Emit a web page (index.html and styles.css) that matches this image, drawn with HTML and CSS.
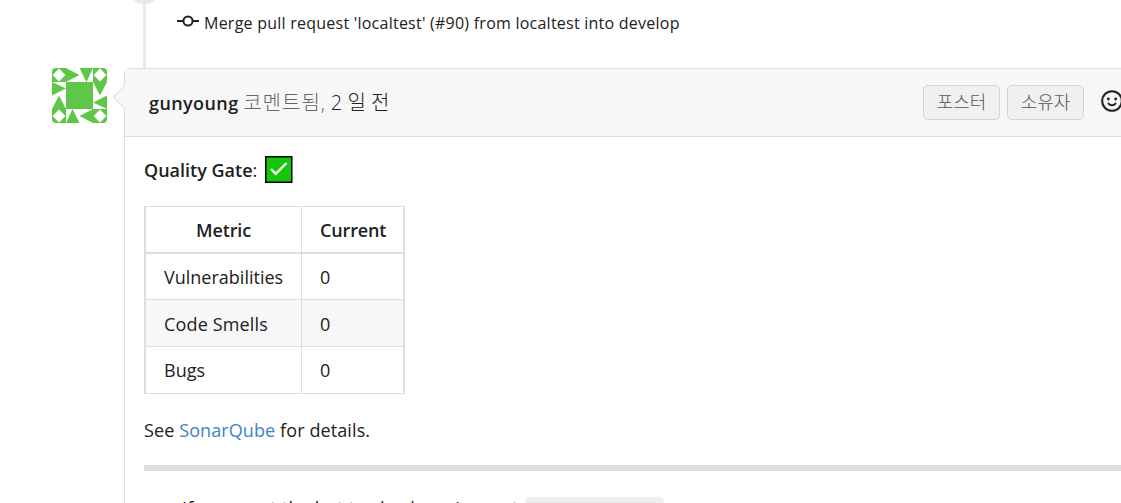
FILE: index.html
```html
<!DOCTYPE html>
<html lang="ko">
<head>
  <meta charset="UTF-8">
  <meta name="viewport" content="width=device-width, initial-scale=1.0">
  <title>Pull request</title>
  <link rel="stylesheet" href="styles.css">
</head>
<body>

<div class="timeline">
  <div class="commit-row">
    <span class="dot"></span>
    <svg class="commit-icon" viewBox="0 0 22 14" width="22" height="14" fill="none" stroke="#212121" stroke-width="2">
      <circle cx="11" cy="7" r="4.6"/>
      <path d="M0 7h6.5M15.5 7H22"/>
    </svg>
    <span class="commit-text">Merge pull request 'localtest' (#90) from localtest into develop</span>
  </div>

  <div class="comment">
    <svg class="avatar" viewBox="0 0 55 55" width="55" height="55">
      <g fill="#5fc648">
        <path d="M14 14h27v27H14z"/>
        <path d="M0 0h14v14H0zM41 0h14v14H41zM0 41h14v14H0zM41 41h14v14H41z"/>
        <path d="M14 0l13.500 7L14 14zM27.500 0H41l-6.500 14z"/>
        <path d="M41 14h14l-7 13.500zM55 27.500V41l-14-6.500z"/>
        <path d="M41 41v14l-13.500-7zM14 55l6.500-14 7 14z"/>
        <path d="M0 41l7-13.500L14 41zM0 14l14 6.500-14 7z"/>
      </g>
      <path d="M7 .6L13.400 7 7 13.400.6 7zM48 .6L54.400 7 48 13.400 41.600 7zM7 41.600L13.400 48 7 54.400.6 48zM48 41.600L54.400 48 48 54.400 41.600 48z" fill="#fff"/>
    </svg>
    <div class="box">
      <span class="arrow"></span>
      <div class="header">
        <div class="author"><b>gunyoung</b> <span class="muted">코멘트됨,</span> <span class="time">2 일 전</span></div>
        <span class="label">포스터</span>
        <span class="label">소유자</span>
        <svg class="smile" viewBox="0 0 22 22" width="22" height="22" fill="none" stroke="#212121" stroke-width="2">
          <circle cx="11" cy="11" r="9.800"/>
          <path d="M7.500 13.500c1.500 2.400 5.500 2.400 7 0" stroke-linecap="round"/>
          <circle cx="7.300" cy="9" r="1.400" fill="#212121" stroke="none"/>
          <circle cx="14.700" cy="9" r="1.400" fill="#212121" stroke="none"/>
        </svg>
      </div>
      <div class="content">
        <p class="gate"><span><b>Quality Gate</b>:</span>
          <svg viewBox="0 0 28 28" width="28" height="28">
            <rect x=".75" y=".75" width="26" height="25.500" fill="#16c60c" stroke="#000" stroke-width="1.500"/>
            <path d="M6 13l4.800 4.800L21.500 7" fill="none" stroke="#fff" stroke-width="2.400"/>
          </svg>
        </p>
        <table>
          <thead>
            <tr><th>Metric</th><th>Current</th></tr>
          </thead>
          <tbody>
            <tr><td>Vulnerabilities</td><td>0</td></tr>
            <tr><td>Code Smells</td><td>0</td></tr>
            <tr><td>Bugs</td><td>0</td></tr>
          </tbody>
        </table>
        <p class="details">See <a href="#">SonarQube</a> for details.</p>
        <hr>
        <div class="hint"><span>If you want the bot to check again, post</span> <code>/sq-bot review</code></div>
      </div>
    </div>
  </div>
</div>

</body>
</html>
```
FILE: styles.css
```css
html {
  overflow: hidden;
}
body {
  margin: 0;
  height: 503px;
  overflow: hidden;
  background: #fff;
  color: #212121;
  font-family: "Open Sans", "Noto Sans CJK KR", sans-serif;
  font-size: 18px;
}
b {
  font-weight: 600;
}
.timeline {
  width: 1121px;
  height: 503px;
  overflow: hidden;
}
.commit-row {
  position: relative;
  display: flex;
  box-sizing: border-box;
  height: 68px;
  margin-left: 143px;
  padding: 7px 0 0 31px;
  border-left: 3px solid #e9e9e9;
}
.dot {
  position: absolute;
  left: -19px;
  top: -31px;
  width: 35px;
  height: 35px;
  border-radius: 50%;
  background: #e9e9e9;
}
.commit-icon {
  margin-top: 7px;
}
.commit-text {
  margin-left: 5px;
  font-size: 16px;
  letter-spacing: 0.24px;
  line-height: 32px;
  white-space: nowrap;
}
.comment {
  display: flex;
  align-items: flex-start;
  width: 1128px;
  padding-left: 52px;
}
.avatar {
  border-radius: 4px;
}
.box {
  position: relative;
  flex: 1;
  height: 500px;
  margin-left: 17px;
  border: 1px solid #dedede;
  border-radius: 5px;
}
.arrow {
  position: absolute;
  left: -9px;
  top: 20px;
  width: 15px;
  height: 15px;
  background: #f7f7f7;
  border-left: 1px solid #dedede;
  border-bottom: 1px solid #dedede;
  transform: rotate(45deg);
}
.header {
  display: flex;
  align-items: center;
  box-sizing: border-box;
  height: 68px;
  padding-left: 24px;
  background: #f7f7f7;
  border-bottom: 1px solid #dedede;
  border-radius: 4px 4px 0 0;
}
.author {
  flex: none;
  width: 774px;
  line-height: 30px;
  white-space: nowrap;
}
.author b {
  letter-spacing: 0.4px;
}
.muted, .time {
  font-size: 20px;
  font-weight: 300;
  letter-spacing: 1px;
}
.muted {
  color: #666;
}
.time {
  letter-spacing: 0;
}
.label {
  flex: none;
  box-sizing: border-box;
  width: 77px;
  height: 35px;
  margin-right: 7px;
  border: 1px solid #d4d4d5;
  border-radius: 5px;
  background: #f0f0f0;
  color: #555;
  font-size: 18px;
  font-weight: 300;
  line-height: 33px;
  text-align: center;
}
.smile {
  flex: none;
  margin: 0 0 3px 10px;
}
.content {
  padding: 18px 0 0 19px;
}
.content p {
  margin: 0;
}
.gate {
  display: flex;
  height: 51px;
  line-height: 30px;
}
.gate span {
  width: 121px;
}
.gate svg {
  margin-top: 1px;
}
table {
  border-collapse: separate;
  border-spacing: 0;
  border: 1px solid #dedede;
  width: 261px;
  table-layout: fixed;
}
th, td {
  box-sizing: border-box;
  height: 46px;
  padding: 0 18px;
  border-bottom: 1px solid #dedede;
  line-height: 24px;
  text-align: left;
}
th {
  height: 47px;
  border-bottom-width: 2px;
  font-weight: 600;
  letter-spacing: -0.15px;
  text-align: center;
}
th:first-child, td:first-child {
  width: 157px;
  border-left: 1px solid #dedede;
  border-right: 1px solid #dedede;
}
th:last-child, td:last-child {
  border-right: 1px solid #dedede;
}
tbody tr:last-child td {
  border-bottom: 0;
}
tbody tr:nth-child(2) {
  background: #f7f7f7;
}
tbody tr:nth-child(2) td {
  height: 47px;
  padding-top: 1px;
  letter-spacing: 0.15px;
}
.content .details {
  margin-top: 21px;
  letter-spacing: 0.1px;
  line-height: 30px;
}
a {
  color: #4183c4;
  text-decoration: none;
}
hr {
  height: 6px;
  margin: 20px 0 26px;
  border: 0;
  background: #dedede;
}
.hint {
  display: flex;
  padding-left: 38px;
  line-height: 22px;
  white-space: nowrap;
}
.hint span {
  width: 343px;
  letter-spacing: 0.2px;
}
code {
  box-sizing: border-box;
  width: 139px;
  height: 28px;
  padding: 3px 6px;
  border-radius: 5px;
  background: #eee;
  font-family: "Liberation Mono", monospace;
  font-size: 15px;
}
```
